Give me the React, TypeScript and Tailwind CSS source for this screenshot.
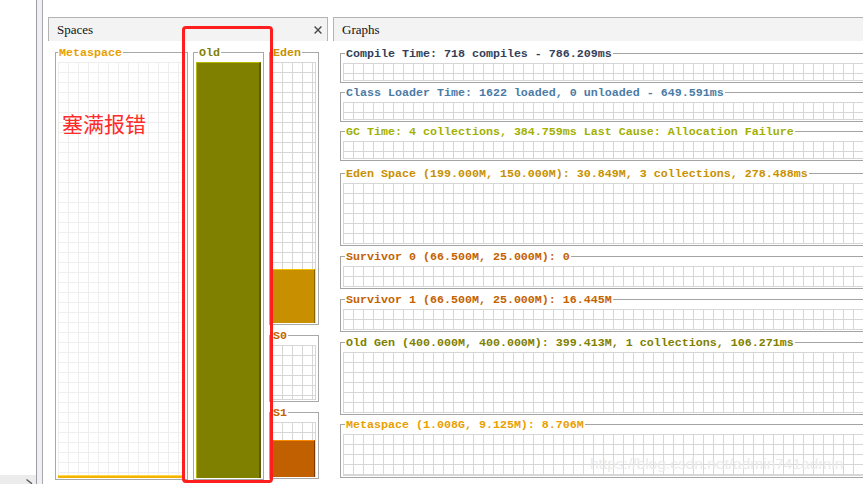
import React from "react";

type GraphDef = { label: string; color: string; box: string };

const graphs: GraphDef[] = [
  { label: "Compile Time: 718 compiles - 786.209ms", color: "text-[#33405a]", box: "mt-[12px] h-[30px]" },
  { label: "Class Loader Time: 1622 loaded, 0 unloaded - 649.591ms", color: "text-[#4a7ba6]", box: "mt-[9px] h-[30px]" },
  { label: "GC Time: 4 collections, 384.759ms Last Cause: Allocation Failure", color: "text-[#a2b000]", box: "mt-[9px] h-[30px]" },
  { label: "Eden Space (199.000M, 150.000M): 30.849M, 3 collections, 278.488ms", color: "text-[#c89000]", box: "mt-[12px] h-[73px]" },
  { label: "Survivor 0 (66.500M, 25.000M): 0", color: "text-[#c46200]", box: "mt-[10px] h-[33px]" },
  { label: "Survivor 1 (66.500M, 25.000M): 16.445M", color: "text-[#c46200]", box: "mt-[10px] h-[33px]" },
  { label: "Old Gen (400.000M, 400.000M): 399.413M, 1 collections, 106.271ms", color: "text-[#808000]", box: "mt-[10px] h-[73px]" },
  { label: "Metaspace (1.008G, 9.125M): 8.706M", color: "text-[#e8a000]", box: "mt-[9px] h-[54px]" },
];

function Legend({ text, color, offset }: { text: string; color: string; offset: string }) {
  return (
    <span
      className={`absolute -top-[6px] ${offset} bg-white px-[1px] leading-[13px] text-[11.67px] font-bold whitespace-nowrap font-['Liberation_Mono',monospace] ${color}`}
    >
      {text}
    </span>
  );
}

const gridDark =
  "bg-[image:linear-gradient(to_right,#d6d6d6_1px,transparent_1px),linear-gradient(to_bottom,#d6d6d6_1px,transparent_1px)] bg-[length:10px_10px]";
const gridLight =
  "bg-[image:linear-gradient(to_right,#eeeeee_1px,transparent_1px),linear-gradient(to_bottom,#eeeeee_1px,transparent_1px)] bg-[length:10px_10px]";

export default function App() {
  return (
    <div className="relative flex w-[863px] h-[484px] overflow-hidden bg-white">
      {/* left strip */}
      <div className="w-[36px] shrink-0 flex flex-col justify-end">
        <div className="h-[9px] bg-[#ececec] flex items-end pl-[26px]">
          <svg width="7" height="5" viewBox="0 0 7 5">
            <path d="M0.5 0.5L6 4.8" stroke="#555" strokeWidth="1.3" />
          </svg>
        </div>
      </div>
      <div className="w-[7px] shrink-0 border-l border-l-[#9c9ca4] border-r border-r-[#a8a8b0] bg-[#f0f0f0]" />

      {/* Spaces panel */}
      <div className="ml-[5px] w-[280px] shrink-0 pt-[17px] flex flex-col">
        <div className="h-[24px] border-t border-x border-[#b4b4b4] bg-[#f3f3f3] flex items-center justify-between pl-[8px] pr-[5px] font-['Liberation_Serif',serif] text-[13px] text-[#111]">
          <span>Spaces</span>
          <svg width="8" height="8" viewBox="0 0 8 8">
            <path d="M0.6 0.6L7.4 7.4M7.4 0.6L0.6 7.4" stroke="#4a4a4a" strokeWidth="1.4" />
          </svg>
        </div>
        <div className="flex pl-[7px] pt-[11px] gap-[5px]">
          {/* Metaspace */}
          <div className="relative w-[133px] h-[428px] border border-[#a8a8a8] pt-[9px] px-[2px] pb-[1px] flex flex-col">
            <Legend text="Metaspace" color="text-[#e8a000]" offset="left-[2px]" />
            <div className={`flex-1 ${gridLight} flex flex-col justify-end`}>
              <div className="h-[3px] bg-[#f2b400] border-t border-t-[#ffd84a]" />
            </div>
          </div>
          {/* Old */}
          <div className="relative w-[71px] h-[428px] border border-[#a8a8a8] pt-[9px] px-[2px] pb-[1px] flex flex-col">
            <Legend text="Old" color="text-[#808000]" offset="left-[4px]" />
            <div className="flex-1 bg-[#808000] border-t border-l border-[#b8b800] border-r-2 border-r-[#5c5c00]" />
          </div>
          {/* Eden / S0 / S1 */}
          <div className="w-[50px] flex flex-col gap-[10px]">
            <div className="relative h-[273px] border border-[#a8a8a8] pt-[9px] px-[2px] pb-[1px] flex flex-col">
              <Legend text="Eden" color="text-[#c89000]" offset="left-[2px]" />
              <div className={`flex-1 ${gridDark} border-r border-[#d6d6d6] flex flex-col justify-end`}>
                <div className="h-[54px] bg-[#c89000] border-t border-t-[#f0c000] border-r border-r-[#8a6400]" />
              </div>
            </div>
            <div className="relative h-[67px] border border-[#a8a8a8] pt-[9px] px-[2px] pb-[1px] flex flex-col">
              <Legend text="S0" color="text-[#c46200]" offset="left-[2px]" />
              <div className={`flex-1 ${gridDark} border-r border-b border-[#d6d6d6]`} />
            </div>
            <div className="relative h-[67px] border border-[#a8a8a8] pt-[9px] px-[2px] pb-[1px] flex flex-col">
              <Legend text="S1" color="text-[#c46200]" offset="left-[2px]" />
              <div className={`flex-1 ${gridDark} border-r border-[#d6d6d6] flex flex-col justify-end`}>
                <div className="h-[37px] bg-[#c06000] border-t border-t-[#ff8a00] border-r border-r-[#7a3c00]" />
              </div>
            </div>
          </div>
        </div>
      </div>

      {/* Graphs panel */}
      <div className="ml-[5px] w-[540px] shrink-0 pt-[17px] flex flex-col">
        <div className="h-[24px] border-t border-l border-[#b4b4b4] bg-[#f3f3f3] flex items-center pl-[8px] font-['Liberation_Serif',serif] text-[13px] text-[#111]">
          <span>Graphs</span>
        </div>
        <div className="flex flex-col pl-[7px]">
          {graphs.map((g) => (
            <div
              key={g.label}
              className={`relative ${g.box} border border-[#a4a4a4] pt-[9px] pl-[2px] pr-[2px] pb-[1px] flex flex-col`}
            >
              <Legend text={g.label} color={g.color} offset="left-[4px]" />
              <div className={`flex-1 ${gridDark} border-b border-[#d6d6d6]`} />
            </div>
          ))}
        </div>
      </div>

      {/* annotations */}
      <div className="absolute left-[182px] top-[26px] w-[91px] h-[457px] border-[3px] border-[#ff1e1e] rounded-[4px]" />
      <div className="absolute left-[62px] top-[113px] text-[21px] leading-[21px] text-[#ff2a2a] font-['Noto_Sans_CJK_SC',sans-serif]">
        塞满报错
      </div>
      <div className="absolute left-[590px] top-[455px] text-[15.5px] leading-[18px] text-[#ebebeb] font-['Liberation_Sans',sans-serif] whitespace-nowrap">
        https://blog.csdn.net/admin741admin
      </div>
    </div>
  );
}
